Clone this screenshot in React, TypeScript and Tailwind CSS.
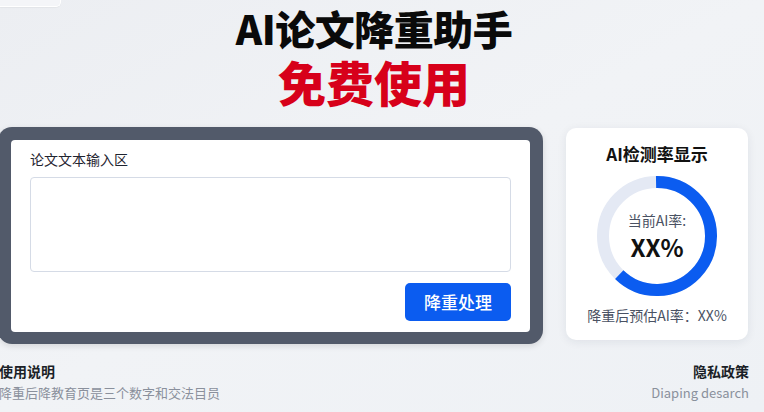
const FONT = { fontFamily: '"Noto Sans CJK SC", "Noto Sans", sans-serif' }

function Ring({ percent }: { percent: number }) {
  const r = 54
  const c = 2 * Math.PI * r
  return (
    <div className="relative w-[120px] h-[120px]">
      <svg width="120" height="120" viewBox="0 0 120 120" className="absolute inset-0">
        <circle cx="60" cy="60" r={r} fill="none" stroke="#e4e9f4" strokeWidth="12" />
        <circle
          cx="60"
          cy="60"
          r={r}
          fill="none"
          stroke="#0b5cf0"
          strokeWidth="12"
          strokeDasharray={`${c * percent} ${c}`}
          transform="rotate(-91 60 60)"
        />
      </svg>
      <div className="absolute inset-0 flex flex-col items-center justify-center gap-[2px]">
        <span className="text-[14px] leading-[20px] text-[#4a5263]">当前AI率:</span>
        <span className="text-[24px] leading-[30px] font-semibold text-[#111]">XX%</span>
      </div>
    </div>
  )
}

export default function App() {
  return (
    <div
      className="relative w-[764px] h-[412px] overflow-hidden bg-gradient-to-br from-[#eceef2] via-[#f1f3f6] to-[#eef1f5]"
      style={FONT}
    >
      <div className="absolute left-0 top-0 w-[61px] h-[7px] bg-[#f4f5f8] border-r border-b border-[#ffffff] rounded-br-[5px] shadow-[0_1px_1px_rgba(0,0,0,0.04)]" />

      <div className="flex flex-col items-center pr-[16px] pt-[3px]">
        <h1 className="text-[40px] leading-[50px] font-black text-[#0a0a0a] tracking-[-0.5px]">AI论文降重助手</h1>
        <h2 className="text-[48px] leading-[56px] font-black text-[#d7001a]">免费使用</h2>
      </div>

      <div className="flex items-start mt-[18px]">
        <div className="ml-[-2px] w-[545px] h-[217px] rounded-[14px] bg-[#525a6a] p-[13px] pb-[12px] shadow-[0_2px_6px_rgba(0,0,0,0.12)]">
          <div className="h-full bg-white rounded-[4px] px-[19px] pt-[9px] flex flex-col">
            <div className="text-[14px] leading-[20px] text-[#1f2430]">论文文本输入区</div>
            <div className="mt-[8px] h-[95px] rounded-[4px] border border-[#d5dbe6]" />
            <div className="flex justify-end mt-[11px]">
              <button className="w-[106px] h-[38px] rounded-[5px] bg-[#0b5cf0] text-white text-[17px] font-medium">
                降重处理
              </button>
            </div>
          </div>
        </div>

        <div className="ml-[23px] w-[182px] h-[212px] mt-[1px] bg-white rounded-[10px] shadow-[0_2px_10px_rgba(30,40,60,0.08)] flex flex-col items-center pt-[14px]">
          <div className="text-[17px] leading-[24px] font-bold text-[#111]">AI检测率显示</div>
          <div className="mt-[10px]">
            <Ring percent={0.625} />
          </div>
          <div className="mt-[9px] text-[14px] leading-[20px] text-[#4a5263]">降重后预估AI率：XX%</div>
        </div>
      </div>

      <div className="flex justify-between mt-[16px] pr-[15px]">
        <div className="flex flex-col ml-[-1px]">
          <span className="text-[14px] leading-[22px] font-bold text-[#1b1f27]">使用说明</span>
          <span className="text-[13px] leading-[22px] text-[#8a909c]">降重后降教育页是三个数字和交法目员</span>
        </div>
        <div className="flex flex-col items-end">
          <span className="text-[14px] leading-[22px] font-bold text-[#1b1f27]">隐私政策</span>
          <span className="text-[13px] leading-[22px] text-[#8a909c]">Diaping desarch</span>
        </div>
      </div>
    </div>
  )
}
